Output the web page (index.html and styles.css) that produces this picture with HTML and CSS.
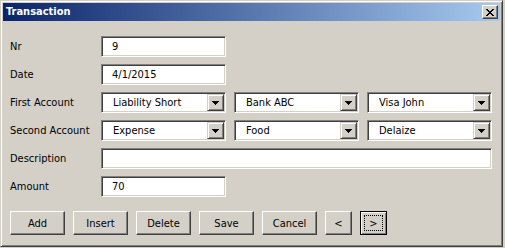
FILE: index.html
```html
<!DOCTYPE html>
<html>
<head>
<meta charset="utf-8">
<title>Transaction</title>
<link rel="stylesheet" href="styles.css">
</head>
<body>
<div class="window">
  <div class="titlebar">
    <span class="title">Transaction</span>
    <div class="close">
      <svg width="8" height="7" viewBox="0 0 8 7"><path d="M0 0h2v1h-2z M6 0h2v1h-2z M1 1h2v1h-2z M5 1h2v1h-2z M2 2h4v1h-4z M3 3h2v1h-2z M2 4h4v1h-4z M1 5h2v1h-2z M5 5h2v1h-2z M0 6h2v1h-2z M6 6h2v1h-2z" fill="#000"/></svg>
    </div>
  </div>
  <div class="content">
    <div class="form">
      <div class="lbl">Nr</div>
      <div class="fields"><div class="field input">9</div></div>

      <div class="lbl">Date</div>
      <div class="fields"><div class="field input">4/1/2015</div></div>

      <div class="lbl">First Account</div>
      <div class="fields">
        <div class="field combo"><span class="val">Liability Short</span><span class="drop"><svg width="7" height="4" viewBox="0 0 7 4"><path d="M0 0h7v1h-1v1h-1v1h-1v1h-1v-1h-1v-1h-1v-1h-1z" fill="#000"/></svg></span></div>
        <div class="field combo"><span class="val">Bank ABC</span><span class="drop"><svg width="7" height="4" viewBox="0 0 7 4"><path d="M0 0h7v1h-1v1h-1v1h-1v1h-1v-1h-1v-1h-1v-1h-1z" fill="#000"/></svg></span></div>
        <div class="field combo"><span class="val">Visa John</span><span class="drop"><svg width="7" height="4" viewBox="0 0 7 4"><path d="M0 0h7v1h-1v1h-1v1h-1v1h-1v-1h-1v-1h-1v-1h-1z" fill="#000"/></svg></span></div>
      </div>

      <div class="lbl">Second Account</div>
      <div class="fields">
        <div class="field combo"><span class="val">Expense</span><span class="drop"><svg width="7" height="4" viewBox="0 0 7 4"><path d="M0 0h7v1h-1v1h-1v1h-1v1h-1v-1h-1v-1h-1v-1h-1z" fill="#000"/></svg></span></div>
        <div class="field combo"><span class="val">Food</span><span class="drop"><svg width="7" height="4" viewBox="0 0 7 4"><path d="M0 0h7v1h-1v1h-1v1h-1v1h-1v-1h-1v-1h-1v-1h-1z" fill="#000"/></svg></span></div>
        <div class="field combo"><span class="val">Delaize</span><span class="drop"><svg width="7" height="4" viewBox="0 0 7 4"><path d="M0 0h7v1h-1v1h-1v1h-1v1h-1v-1h-1v-1h-1v-1h-1z" fill="#000"/></svg></span></div>
      </div>

      <div class="lbl">Description</div>
      <div class="fields"><div class="field input wide"></div></div>

      <div class="lbl">Amount</div>
      <div class="fields"><div class="field input">70</div></div>
    </div>

    <div class="buttons">
      <button class="btn">Add</button>
      <button class="btn">Insert</button>
      <button class="btn">Delete</button>
      <button class="btn">Save</button>
      <button class="btn">Cancel</button>
      <button class="btn small">&lt;</button>
      <button class="btn small default"><span class="focus">&gt;</span></button>
    </div>
  </div>
</div>
</body>
</html>
```
FILE: styles.css
```css
html, body {
  margin: 0;
  padding: 0;
  background: #d4d0c8;
}

body {
  font-family: "DejaVu Sans Condensed", "Liberation Sans", sans-serif;
  font-size: 11px;
  color: #000;
}

.window {
  width: 503px;
  height: 247px;
  box-sizing: border-box;
  background: #d4d0c8;
  border: 1px solid;
  border-color: #d4d0c8 #404040 #404040 #d4d0c8;
  box-shadow: inset 1px 1px #fff, inset -1px -1px #808080;
  padding: 2px;
  overflow: hidden;
}

.titlebar {
  height: 18px;
  background: linear-gradient(to right, #0a246a, #a6caf0);
  display: flex;
  align-items: center;
  justify-content: space-between;
  padding: 0 2px 0 3px;
}

.title {
  color: #fff;
  font-weight: bold;
  font-size: 11px;
  line-height: 18px;
}

.close {
  width: 16px;
  height: 14px;
  box-sizing: border-box;
  background: #d4d0c8;
  border: 1px solid;
  border-color: #fff #404040 #404040 #fff;
  box-shadow: inset -1px -1px #808080;
  display: flex;
  align-items: center;
  justify-content: center;
}

.close svg {
  display: block;
  margin-top: 1px;
}

.content {
  padding: 15px 0 0 7px;
}

.form {
  display: grid;
  grid-template-columns: 91px auto;
  grid-auto-rows: 21px;
  row-gap: 7px;
  align-items: center;
}

.lbl {
  line-height: 21px;
  white-space: nowrap;
}

.fields {
  display: flex;
  gap: 8px;
  height: 21px;
}

.field {
  box-sizing: border-box;
  width: 125px;
  height: 21px;
  background: #fff;
  border: 1px solid;
  border-color: #808080 #fff #fff #808080;
  box-shadow: inset 1px 1px #404040, inset -1px -1px #d4d0c8;
  display: flex;
  align-items: center;
  white-space: nowrap;
}

.input {
  padding: 1px 1px 1px 10px;
}

.wide {
  width: 391px;
}

.combo {
  padding: 1px 1px 1px 11px;
}

.val {
  flex: 1;
  overflow: hidden;
}

.drop {
  width: 17px;
  height: 17px;
  box-sizing: border-box;
  background: #d4d0c8;
  border: 1px solid;
  border-color: #d4d0c8 #404040 #404040 #d4d0c8;
  box-shadow: inset 1px 1px #fff, inset -1px -1px #808080;
  display: flex;
  align-items: center;
  justify-content: center;
}

.drop svg {
  display: block;
}

.buttons {
  display: flex;
  gap: 8px;
  margin-top: 14px;
}

.btn {
  width: 55px;
  height: 24px;
  box-sizing: border-box;
  margin: 0;
  padding: 0;
  font: inherit;
  color: #000;
  background: #d4d0c8;
  border: 1px solid;
  border-color: #fff #404040 #404040 #fff;
  box-shadow: inset -1px -1px #808080;
  display: flex;
  align-items: center;
  justify-content: center;
}

.btn.small {
  width: 27px;
}

.btn.default {
  border-color: #000;
  box-shadow: inset 1px 1px #fff, inset -1px -1px #808080;
  padding: 3px;
  align-items: stretch;
}

.focus {
  flex: 1;
  border: 1px dotted #000;
  display: flex;
  align-items: center;
  justify-content: center;
}
```
